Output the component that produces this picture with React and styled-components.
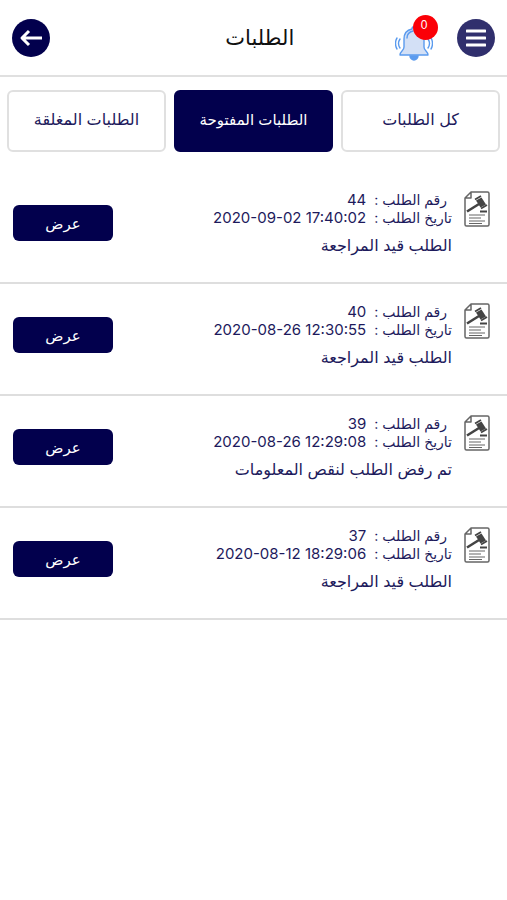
import React, { useState } from 'react';
import styled, { createGlobalStyle } from 'styled-components';

const GlobalStyle = createGlobalStyle`
  * {
    box-sizing: border-box;
  }

  body {
    margin: 0;
    background: #fff;
    color: #1d1a5c;
    font-family: Inter, 'DejaVu Sans', sans-serif;
  }

  button {
    font-family: inherit;
    cursor: pointer;
  }
`;

const Header = styled.header`
  display: grid;
  grid-template-columns: 16fr auto 17fr;
  align-items: center;
  height: 77px;
  padding: 0 12px;
  border-bottom: 2px solid #e0e0e0;
`;

const HeaderActions = styled.div`
  display: flex;
  align-items: center;
  gap: 24px;
`;

const Title = styled.h1`
  margin: 0;
  color: #111;
  font-size: 21px;
  font-weight: 400;
  line-height: 28px;
`;

const RoundButton = styled.button`
  display: flex;
  align-items: center;
  justify-content: center;
  width: 38px;
  height: 38px;
  padding: 0;
  border: none;
  border-radius: 50%;
  background: ${(props) => props.$color};
  justify-self: end;
`;

const BellButton = styled.button`
  position: relative;
  display: flex;
  padding: 10px 0 0;
  border: none;
  background: none;
`;

const Badge = styled.span`
  position: absolute;
  top: 0;
  right: -5px;
  width: 25px;
  height: 25px;
  padding-right: 3px;
  border-radius: 50%;
  background: #fb0007;
  color: #fff;
  font-family: 'Liberation Sans', sans-serif;
  font-size: 12px;
  line-height: 21px;
  text-align: center;
`;

const Tabs = styled.nav`
  display: flex;
  gap: 8px;
  padding: 13px 7px 20px;
`;

const Tab = styled.button`
  flex: 1;
  height: 62px;
  padding: 0 0 4px;
  border: 2px solid ${(props) => (props.$active ? '#02004d' : '#e0e0e0')};
  border-radius: 6px;
  background: ${(props) => (props.$active ? '#02004d' : '#fff')};
  color: ${(props) => (props.$active ? '#fff' : '#1d1a5c')};
  font-size: ${(props) => (props.$active ? '15px' : '16px')};
  white-space: nowrap;
`;

const List = styled.ul`
  margin: 0;
  padding: 0;
  list-style: none;
`;

const Row = styled.li`
  display: flex;
  align-items: flex-start;
  gap: 12px;
  height: 112px;
  padding: 19px 17px 0 13px;
  border-bottom: 2px solid #dedede;
  direction: rtl;
`;

const Details = styled.div`
  flex: 1;
`;

const Line = styled.div`
  padding-right: ${(props) => (props.$indent ? '5px' : '0')};
  font-size: 14px;
  line-height: 18px;

  & bdi {
    margin-right: 8px;
    font-size: 15px;
  }
`;

const Status = styled.div`
  margin-top: 6px;
  font-size: 16px;
  line-height: 24px;
`;

const ViewButton = styled.button`
  width: 100px;
  height: 36px;
  margin-top: 14px;
  padding: 0;
  border: none;
  border-radius: 6px;
  background: #02004d;
  color: #fff;
  font-size: 15px;
`;

const BackIcon = () => (
  <svg width='24' height='24' viewBox='0 0 24 24' fill='none' stroke='#fff' strokeWidth='3'>
    <path d='M23 12H3M10 5l-7 7 7 7' strokeLinejoin='round' />
  </svg>
);

const MenuIcon = () => (
  <svg width='20' height='18' viewBox='0 0 20 18' fill='none' stroke='#fff' strokeWidth='3'>
    <path d='M1 2h18M1 9h18M1 16h18' strokeLinecap='round' />
  </svg>
);

const BellIcon = () => (
  <svg width='38' height='36' viewBox='0 0 38 36' fill='none' stroke='#5b9bee' strokeWidth='1.4' strokeLinecap='round'>
    <path d='M15 31c0 2 2 4 4 4s4-2 4-4z' fill='#5b9bee' />
    <path
      d='M17 4c0-3 4-3 4 0 5 1 8 5 8 10v8c0 4 4 4 4 8H5c0-4 4-4 4-8v-8c0-5 3-9 8-10z'
      fill='#d3e0f6'
      strokeLinejoin='round'
    />
    <path d='M12 13c0-4 2-6 6-7M5 14c-2 3-2 6 0 9M2 13c-2 3-2 8 0 11M33 14c2 3 2 6 0 9M36 13c2 3 2 8 0 11' />
  </svg>
);

const CaseIcon = () => (
  <svg width='26' height='36' viewBox='0 0 26 36' fill='none' stroke='#666' strokeWidth='1.5'>
    <path d='M7 1h16.500q1.500 0 1.500 1.500v31q0 1.500-1.500 1.500h-21q-1.500 0-1.500-1.500V7zM7 1v6H1' strokeLinejoin='round' />
    <path d='M3 20.500L15 13' stroke='#444' strokeWidth='2.600' />
    <path d='M12 9.500l5.500-3 4.500 7-5.500 3z' fill='#444' stroke='none' />
    <path d='M11 8.500l6-3.500M17 17.500l6-3.500' stroke='#444' strokeWidth='1.800' />
    <path d='M16 20.500h7' stroke='#444' strokeWidth='2' />
    <path d='M5 24h16M5 27h12M5 30h16M5 32.500h13' strokeWidth='1.200' />
  </svg>
);

const tabs = [
  { id: 'closed', label: 'الطلبات المغلقة' },
  { id: 'open', label: 'الطلبات المفتوحة' },
  { id: 'all', label: 'كل الطلبات' },
];

const requests = [
  { id: 44, date: '2020-09-02 17:40:02', status: 'الطلب قيد المراجعة' },
  { id: 40, date: '2020-08-26 12:30:55', status: 'الطلب قيد المراجعة' },
  { id: 39, date: '2020-08-26 12:29:08', status: 'تم رفض الطلب لنقص المعلومات' },
  { id: 37, date: '2020-08-12 18:29:06', status: 'الطلب قيد المراجعة' },
];

const RequestRow = ({ request }) => (
  <Row>
    <CaseIcon />
    <Details>
      <Line $indent>
        رقم الطلب :<bdi>{request.id}</bdi>
      </Line>
      <Line>
        تاريخ الطلب :<bdi dir='ltr'>{request.date}</bdi>
      </Line>
      <Status>{request.status}</Status>
    </Details>
    <ViewButton>عرض</ViewButton>
  </Row>
);

const App = () => {
  const [activeTab, setActiveTab] = useState('open');

  return (
    <>
      <GlobalStyle />
      <Header dir='rtl'>
        <HeaderActions>
          <RoundButton $color='#302f6d' aria-label='القائمة'>
            <MenuIcon />
          </RoundButton>
          <BellButton aria-label='الإشعارات'>
            <BellIcon />
            <Badge>0</Badge>
          </BellButton>
        </HeaderActions>
        <Title>الطلبات</Title>
        <RoundButton $color='#02004d' aria-label='رجوع'>
          <BackIcon />
        </RoundButton>
      </Header>
      <Tabs>
        {tabs.map((tab) => (
          <Tab key={tab.id} $active={tab.id === activeTab} onClick={() => setActiveTab(tab.id)}>
            {tab.label}
          </Tab>
        ))}
      </Tabs>
      <List>
        {requests.map((request) => (
          <RequestRow key={request.id} request={request} />
        ))}
      </List>
    </>
  );
};

export default App;
